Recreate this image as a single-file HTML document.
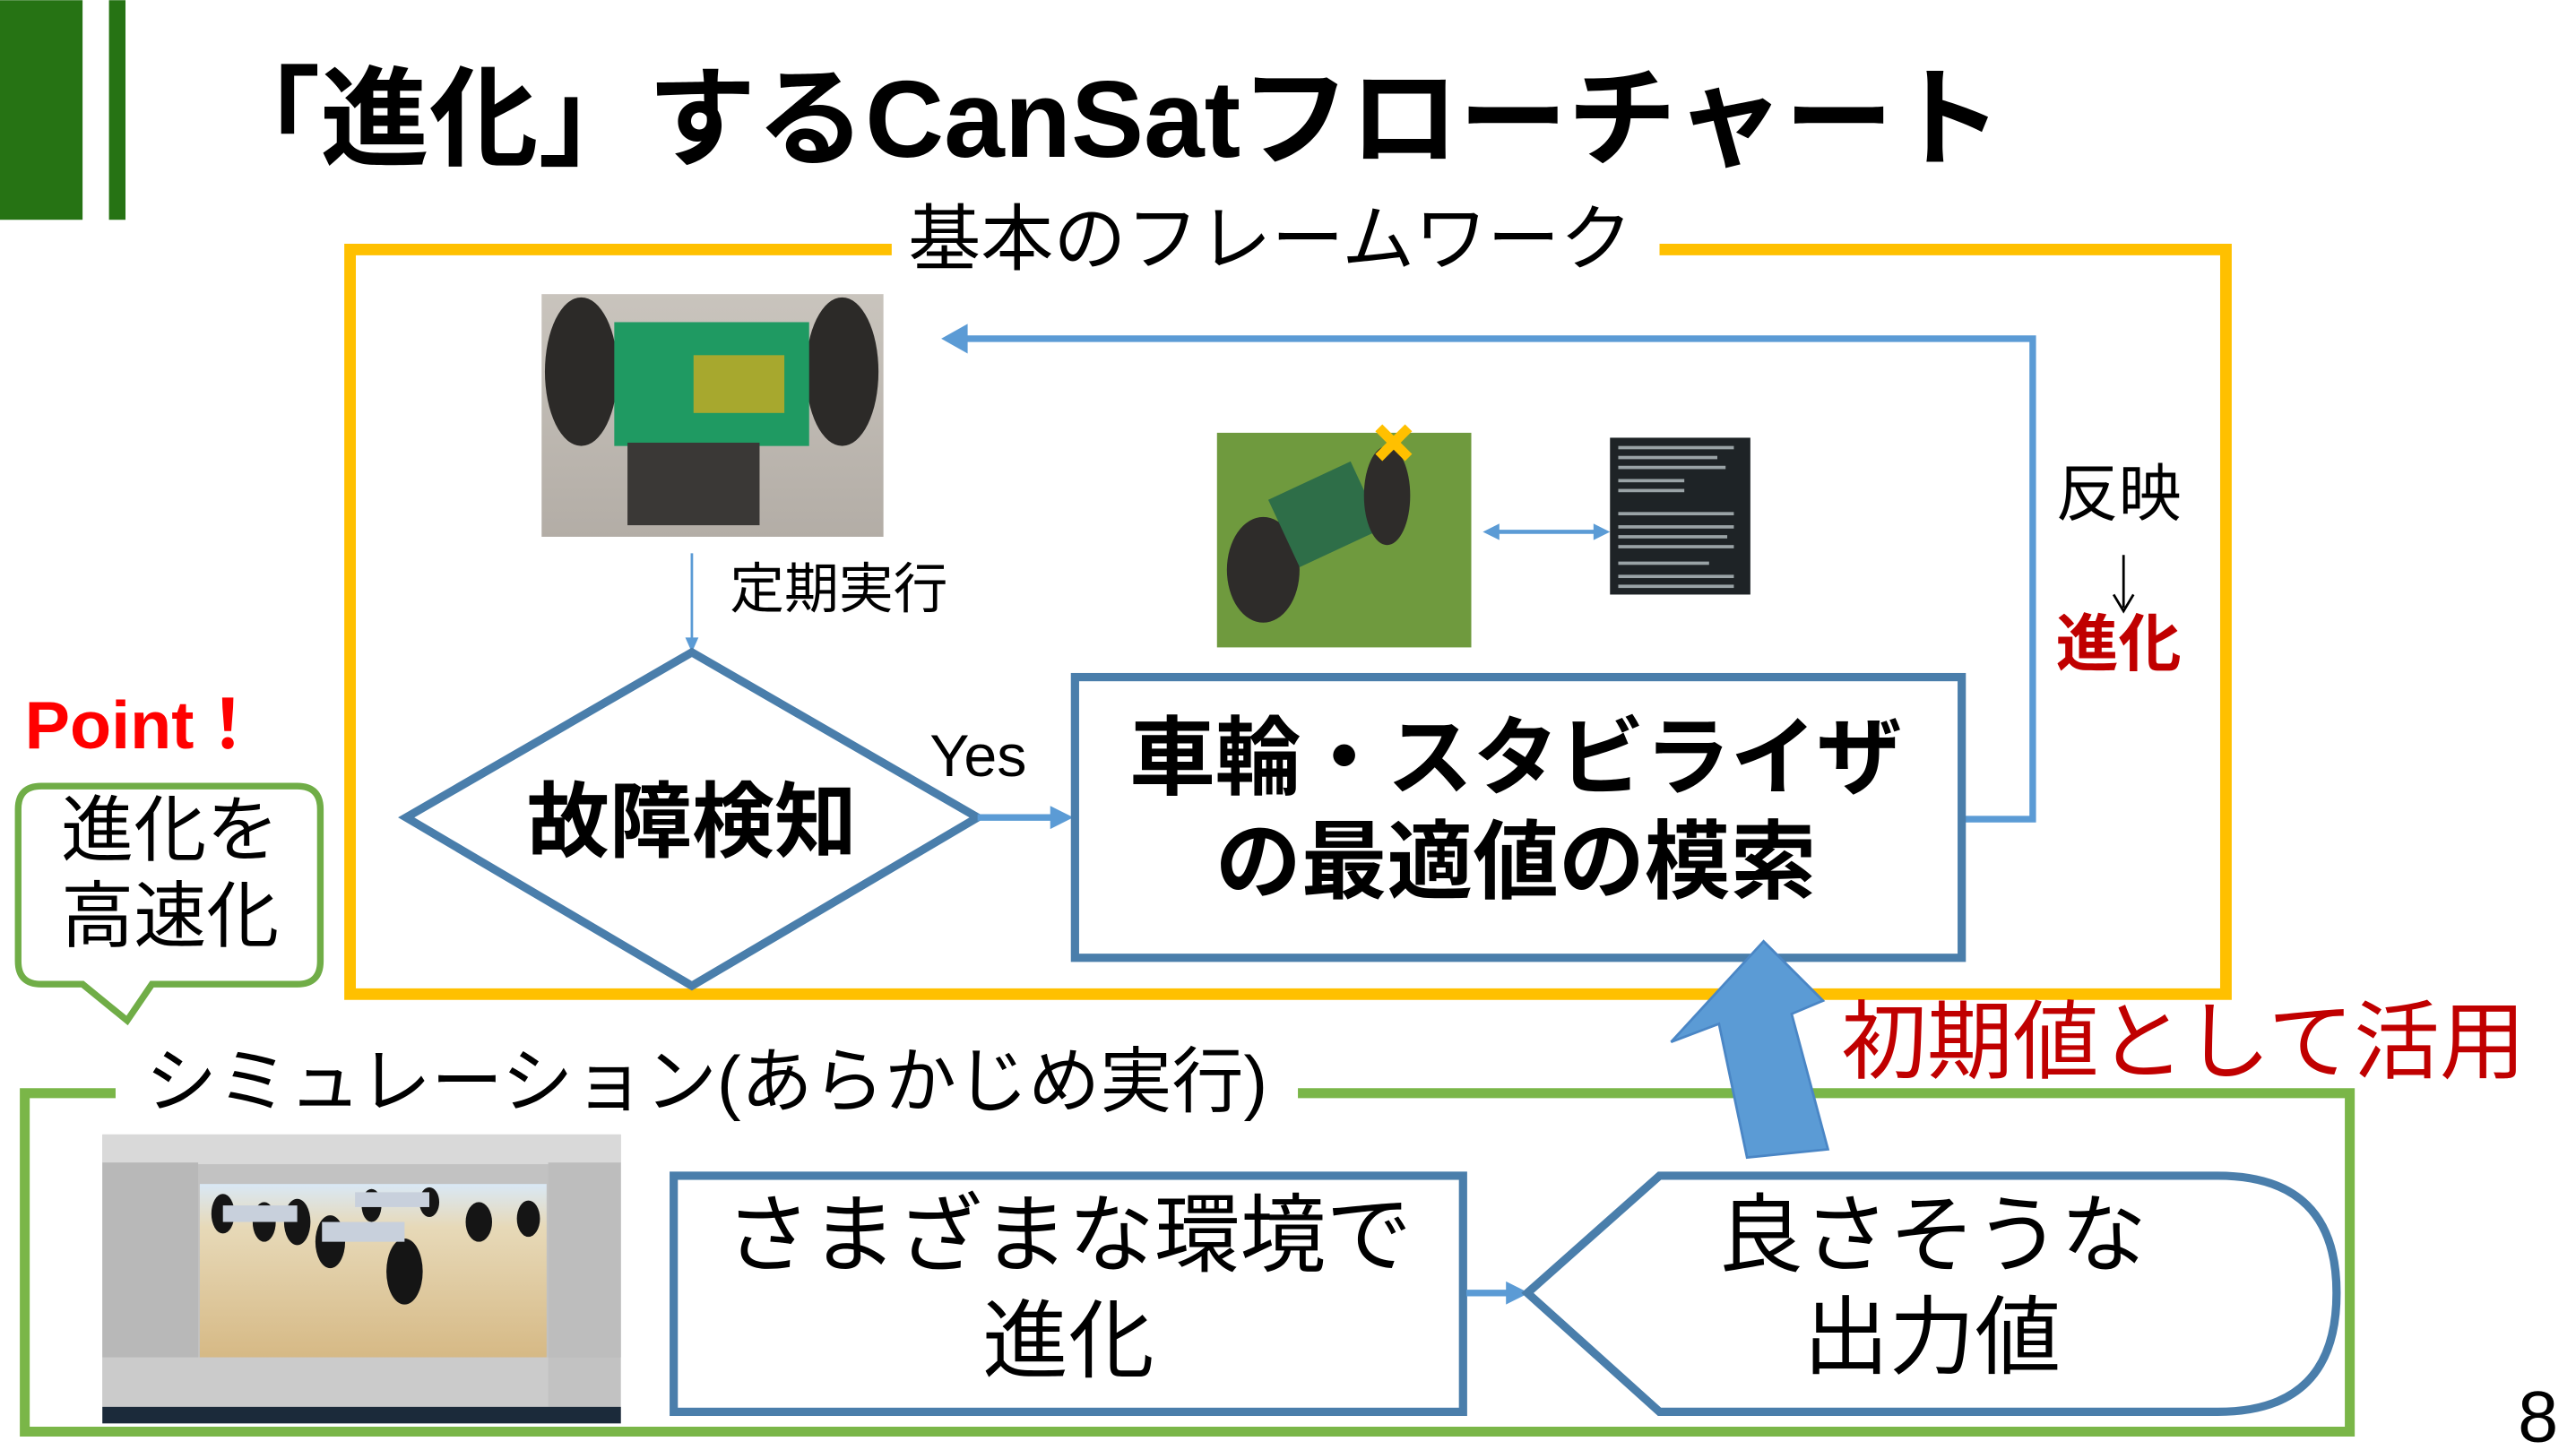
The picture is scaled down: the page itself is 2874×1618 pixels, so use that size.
<!DOCTYPE html>
<html><head><meta charset="utf-8"><style>
html,body{margin:0;padding:0;background:#fff;overflow:hidden}
svg{display:block}
text{font-family:"Liberation Sans","Noto Sans CJK JP",sans-serif}
</style></head><body>
<svg width="2874" height="1618" viewBox="0 0 1560 878" xmlns="http://www.w3.org/2000/svg">
<defs>
<linearGradient id="g1" x1="0" y1="0" x2="0" y2="1"><stop offset="0" stop-color="#c9c4bd"/><stop offset="1" stop-color="#b3ada6"/></linearGradient>
<linearGradient id="sky" x1="0" y1="0" x2="0" y2="1"><stop offset="0" stop-color="#d9e8f5"/><stop offset="0.25" stop-color="#e7d9b8"/><stop offset="1" stop-color="#d6b985"/></linearGradient>
</defs>
<rect x="0" y="0" width="50" height="133" fill="#267314"/>
<rect x="66" y="0" width="10" height="133" fill="#267314"/>
<text x="128" y="95" font-size="66" font-weight="bold" fill="#000">「進化」するCanSatフローチャート</text>

<path d="M540,151 H212 V602 H1348 V151 H1005" fill="none" stroke="#FFC000" stroke-width="7"/>
<text x="550" y="160" font-size="44" fill="#000">基本のフレームワーク</text>

<rect x="328" y="178" width="207" height="147" fill="url(#g1)"/>
<ellipse cx="352" cy="225" rx="22" ry="45" fill="#2c2a28"/>
<ellipse cx="510" cy="225" rx="22" ry="45" fill="#2c2a28"/>
<rect x="372" y="195" width="118" height="75" fill="#1f9a62"/>
<rect x="420" y="215" width="55" height="35" fill="#a7a82e"/>
<rect x="380" y="268" width="80" height="50" fill="#3a3836"/>

<rect x="737" y="262" width="154" height="130" fill="#6f9a3e"/>
<ellipse cx="765" cy="345" rx="22" ry="32" fill="#2e2c2a"/>
<rect x="775" y="290" width="55" height="45" fill="#2e6e48" transform="rotate(-25 800 312)"/>
<ellipse cx="840" cy="300" rx="14" ry="30" fill="#2e2c2a"/>
<path d="M835,259 L853,277 M853,259 L835,277" stroke="#FFC000" stroke-width="6"/>
<rect x="975" y="265" width="85" height="95" fill="#1e2326"/>
<g fill="#9aa3a6">
<rect x="980" y="270" width="70" height="2"/><rect x="980" y="276" width="60" height="2"/><rect x="980" y="282" width="65" height="2"/><rect x="980" y="290" width="40" height="2"/><rect x="980" y="296" width="40" height="2"/><rect x="980" y="310" width="70" height="2"/><rect x="980" y="318" width="70" height="2"/><rect x="980" y="324" width="66" height="2"/><rect x="980" y="330" width="70" height="2"/><rect x="980" y="340" width="55" height="2"/><rect x="980" y="348" width="70" height="2"/><rect x="980" y="354" width="70" height="2"/></g>
<line x1="906" y1="322" x2="967" y2="322" stroke="#5B9BD5" stroke-width="2.5"/>
<path d="M898,322 L908,317 L908,327 z M975,322 L965,317 L965,327 z" fill="#5B9BD5"/>

<path d="M1188,496 H1231 V205 H584" fill="none" stroke="#5B9BD5" stroke-width="4"/>
<path d="M570,205 L586,196 L586,214 z" fill="#5B9BD5"/>
<text x="1245" y="312" font-size="38" fill="#000">反映</text>
<line x1="1286" y1="336" x2="1286" y2="368" stroke="#000" stroke-width="1.5"/>
<path d="M1280,360 L1286,370 L1292,360" fill="none" stroke="#000" stroke-width="1.5"/>
<text x="1245" y="403" font-size="38" font-weight="bold" fill="#C00000">進化</text>

<line x1="419" y1="335" x2="419" y2="388" stroke="#5B9BD5" stroke-width="1.5"/>
<path d="M415,386 L419,395 L423,386 z" fill="#5B9BD5"/>
<text x="442" y="368" font-size="33" fill="#000">定期実行</text>

<path d="M419,395 L592,495 L419,597 L246,495 z" fill="#fff" stroke="#4A7EAB" stroke-width="5"/>
<text x="419" y="515" font-size="50" font-weight="bold" text-anchor="middle" fill="#000">故障検知</text>
<text x="563" y="470" font-size="36" fill="#000">Yes</text>
<line x1="592" y1="495" x2="638" y2="495" stroke="#5B9BD5" stroke-width="4"/>
<path d="M650,495 L636,488 L636,502 z" fill="#5B9BD5"/>

<rect x="651" y="410" width="537" height="170" fill="#fff" stroke="#4A7EAB" stroke-width="5"/>
<text x="918" y="477" font-size="52" font-weight="bold" text-anchor="middle" fill="#000">車輪・スタビライザ</text>
<text x="918" y="540" font-size="52" font-weight="bold" text-anchor="middle" fill="#000">の最適値の模索</text>

<text x="15" y="453" font-size="41" font-weight="bold" fill="#FF0000">Point！</text>
<path d="M25,476 H180 Q194,476 194,490 V582 Q194,596 180,596 H92 L77,618 L50,596 H25 Q11,596 11,582 V490 Q11,476 25,476 z" fill="#fff" stroke="#70AD47" stroke-width="4"/>
<text x="103" y="518" font-size="44" text-anchor="middle" fill="#000">進化を</text>
<text x="103" y="570" font-size="44" text-anchor="middle" fill="#000">高速化</text>

<path d="M70,662 H15 V867 H1423 V662 H786" fill="none" stroke="#7AB648" stroke-width="6"/>
<text x="88" y="670" font-size="43.5" fill="#000">シミュレーション(あらかじめ実行)</text>

<rect x="62" y="687" width="314" height="175" fill="#c2c2c2"/>
<rect x="62" y="687" width="314" height="18" fill="#d9d9d9"/>
<rect x="62" y="704" width="58" height="118" fill="#b8b8b8"/>
<rect x="121" y="717" width="210" height="105" fill="url(#sky)"/>
<rect x="332" y="704" width="44" height="118" fill="#bdbdbd"/>
<rect x="62" y="822" width="270" height="30" fill="#cbcbcb"/>
<rect x="62" y="852" width="314" height="10" fill="#1b2a3a"/>
<g fill="#151515">
<ellipse cx="135" cy="735" rx="7" ry="12"/><ellipse cx="180" cy="740" rx="8" ry="14"/><ellipse cx="200" cy="752" rx="9" ry="16"/><ellipse cx="245" cy="770" rx="11" ry="20"/><ellipse cx="160" cy="740" rx="7" ry="12"/><ellipse cx="290" cy="740" rx="8" ry="12"/><ellipse cx="320" cy="738" rx="7" ry="11"/><ellipse cx="225" cy="730" rx="6" ry="10"/><ellipse cx="260" cy="728" rx="6" ry="9"/>
</g>
<g fill="#c8d0dc"><rect x="135" y="730" width="45" height="10"/><rect x="195" y="740" width="50" height="12"/><rect x="215" y="722" width="45" height="9"/></g>

<rect x="408" y="712" width="478" height="143" fill="#fff" stroke="#4A7EAB" stroke-width="5"/>
<text x="647" y="766" font-size="52" text-anchor="middle" fill="#000">さまざまな環境で</text>
<text x="647" y="830" font-size="52" text-anchor="middle" fill="#000">進化</text>
<line x1="888" y1="783" x2="914" y2="783" stroke="#5B9BD5" stroke-width="4"/>
<path d="M926,783 L912,776 L912,790 z" fill="#5B9BD5"/>

<path d="M925,783 L1005,712 H1343 Q1415,712 1415,783 Q1415,855 1343,855 H1005 z" fill="#fff" stroke="#4A7EAB" stroke-width="5"/>
<text x="1170" y="766" font-size="52" text-anchor="middle" fill="#000">良さそうな</text>
<text x="1170" y="828" font-size="52" text-anchor="middle" fill="#000">出力値</text>

<path d="M1068,570 L1104,606 L1085,614 L1107,696 L1058,701 L1041,620 L1012,631 z" fill="#5B9BD5" stroke="#4A86C5" stroke-width="1.5"/>
<text x="1115" y="649" font-size="52" fill="#C00000">初期値として活用</text>

<text x="1537" y="873" font-size="44" text-anchor="middle" fill="#000">8</text>
</svg>
</body></html>
